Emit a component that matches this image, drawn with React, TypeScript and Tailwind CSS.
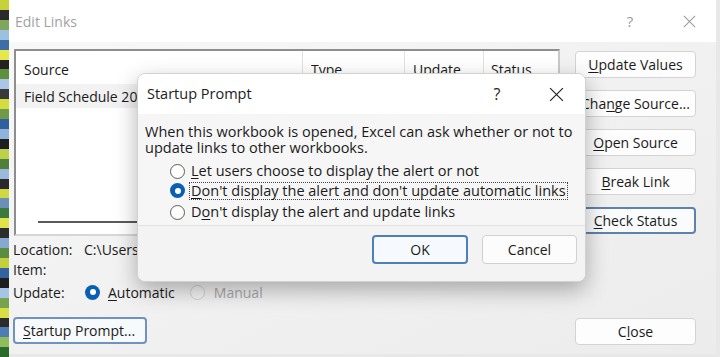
import React from "react";

const stripColors = [
  "#c7d23a", "#2b2b2b", "#7fa65a", "#9cc0e0", "#3d6ea8", "#e6e84a", "#222222", "#5e8f3c",
  "#a9c6e6", "#3a3a3a", "#d4dc3e", "#6f9a4a", "#2e5f9e", "#8fb3da", "#1f1f1f", "#bcd04a",
  "#4f7f38", "#9ab9dd", "#2a2a2a", "#cfd83f", "#6a8fb8", "#3b7a3b", "#e0e34c", "#2d2d2d",
  "#86a9d2", "#5c8c40", "#c4cf3c", "#34649f", "#1e1e1e", "#a6c4e4", "#78a34e", "#d8de44",
  "#2c2c2c", "#4d7db5", "#8fbd5a", "#2a6a2a",
];

function X({ size = 14, color = "#333" }: { size?: number; color?: string }) {
  return (
    <svg width={size} height={size} viewBox="0 0 14 14">
      <path d="M1 1 L13 13 M13 1 L1 13" stroke={color} strokeWidth="1.1" fill="none" />
    </svg>
  );
}

function Btn({ children, cls }: { children: React.ReactNode; cls: string }) {
  return (
    <div
      className={
        "h-[27px] flex items-center justify-center rounded-[4px] text-[14px] text-[#1b1b1b] " + cls
      }
    >
      {children}
    </div>
  );
}

function Radio({ checked, disabled }: { checked?: boolean; disabled?: boolean }) {
  if (checked) {
    return (
      <div className="w-[15px] h-[15px] rounded-full bg-[#0a5fb4] flex items-center justify-center shrink-0">
        <div className="w-[6px] h-[6px] rounded-full bg-white" />
      </div>
    );
  }
  return (
    <div
      className={
        disabled
          ? "w-[15px] h-[15px] rounded-full border border-[#cfcfcf] bg-[#f3f3f3] shrink-0"
          : "w-[15px] h-[15px] rounded-full border border-[#5c5c5c] bg-white shrink-0"
      }
    />
  );
}

export default function App() {
  return (
    <div className="w-[720px] h-[357px] relative overflow-hidden bg-[#e8e8e8] flex font-['Open_Sans',sans-serif] text-[#1b1b1b]">
      {/* left background strip */}
      <div className="w-[9px] h-full flex flex-col">
        {stripColors.map((c, i) => (
          <div key={i} className="flex-1" style={{ backgroundColor: c }} />
        ))}
      </div>

      {/* Edit Links dialog */}
      <div className="w-[707px] h-[354px] flex flex-col bg-white">
        {/* title bar */}
        <div className="h-[42px] bg-white flex items-center pl-[6px] shrink-0">
          <span className="text-[14px] text-[#a2a2a2]">Edit Links</span>
          <span className="ml-auto text-[15px] text-[#9a9a9a] w-[14px] text-center">?</span>
          <div className="ml-[45px] mr-[20px] w-[14px] flex items-center justify-center">
            <X size={13} color="#9a9a9a" />
          </div>
        </div>

        {/* body */}
        <div className="flex-1 flex bg-gradient-to-br from-[#f8f8f8] via-[#f1f1f1] to-[#ececec] pl-[5px]">
          {/* left column */}
          <div className="w-[546px] flex flex-col pt-[7px]">
            {/* list box */}
            <div className="h-[187px] border-2 border-[#8e8e8e] border-r-[#c9c9c9] border-b-[#d6d6d6] bg-white flex flex-col">
              <div className="h-[33px] flex items-center text-[14px] bg-white">
                <div className="w-[287px] h-full flex items-center pl-[8px] pt-[3px] border-r border-[#e1e1e1]">Source</div>
                <div className="w-[102px] h-full flex items-center pl-[8px] pt-[3px] border-r border-[#e1e1e1]">Type</div>
                <div className="w-[79px] h-full flex items-center pl-[8px] pt-[3px] border-r border-[#e1e1e1]">Update</div>
                <div className="flex-1 h-full flex items-center pl-[7px] pt-[3px]">Status</div>
              </div>
              <div className="h-[24px] flex items-center text-[14px] bg-[#f2f2f2] w-[287px]">
                <div className="ml-[8px] w-[113px] overflow-hidden whitespace-nowrap">Field Schedule 2021.xlsx</div>
              </div>
              <div className="mt-auto mb-[11px] ml-[22px] w-[480px] h-[2px] bg-[#5a5a5a]" />
            </div>

            {/* info rows */}
            <div className="mt-[3px] ml-[-1px] text-[14px] flex flex-col">
              <div className="h-[20px] flex items-center">
                <span className="w-[71px]">Location:</span>
                <span className="w-[53px] overflow-hidden whitespace-nowrap">C:\Users\Documents\Field Schedule 2021.xlsx</span>
              </div>
              <div className="h-[20px] flex items-center">
                <span className="w-[71px]">Item:</span>
              </div>
              <div className="h-[24px] mt-[1px] flex items-center">
                <span className="w-[72px]">Update:</span>
                <Radio checked />
                <span className="ml-[8px]">
                  <u className="underline-offset-2">A</u>utomatic
                </span>
                <div className="ml-[15px]">
                  <Radio disabled />
                </div>
                <span className="ml-[9px] text-[#a8a8a8]">Manual</span>
              </div>
            </div>

            <div className="mt-[13px] ml-[-1px] w-[134px]">
              <Btn cls="border-2 border-[#6f93bb] bg-[#f7fafd] justify-start pl-[8px]">
                <span>
                  <u className="underline-offset-2">S</u>tartup Prompt...
                </span>
              </Btn>
            </div>
          </div>

          {/* right column */}
          <div className="ml-[15px] w-[121px] flex flex-col pt-[9px] gap-[12px]">
            <Btn cls="border border-[#d3d3d3] bg-[#fdfdfd]">
              <span><u className="underline-offset-2">U</u>pdate Values</span>
            </Btn>
            <Btn cls="border border-[#d3d3d3] bg-[#fdfdfd]">
              <span>Cha<u className="underline-offset-2">n</u>ge Source...</span>
            </Btn>
            <Btn cls="border border-[#d3d3d3] bg-[#fdfdfd]">
              <span><u className="underline-offset-2">O</u>pen Source</span>
            </Btn>
            <Btn cls="border border-[#d3d3d3] bg-[#fdfdfd]">
              <span><u className="underline-offset-2">B</u>reak Link</span>
            </Btn>
            <Btn cls="border-2 border-[#5f82aa] bg-[#f9fbfd]">
              <span><u className="underline-offset-2">C</u>heck Status</span>
            </Btn>
            <Btn cls="mt-[72px] border border-[#d3d3d3] bg-[#fdfdfd]">
              <span>C<u className="underline-offset-2">l</u>ose</span>
            </Btn>
          </div>
        </div>
      </div>

      {/* Startup Prompt overlay dialog */}
      <div className="absolute left-[137px] top-[73px] w-[449px] h-[209px] rounded-[8px] border border-[#d2d2d2] bg-[#f4f4f4] shadow-[0_8px_22px_rgba(0,0,0,0.3)] flex flex-col overflow-hidden">
        <div className="h-[40px] bg-white flex items-center pl-[9px] shrink-0">
          <span className="text-[14.5px] text-[#1b1b1b]">Startup Prompt</span>
          <span className="ml-auto text-[16px] text-[#222] w-[14px] text-center">?</span>
          <div className="ml-[45px] mr-[21px] w-[15px] flex items-center justify-center">
            <X size={15} color="#222" />
          </div>
        </div>
        <div className="flex-1 bg-[#f6f6f6] flex flex-col pl-[7px] pt-[10px] text-[14.5px]">
          <div className="leading-[16px] whitespace-nowrap">When this workbook is opened, Excel can ask whether or not to</div>
          <div className="leading-[16px]">update links to other workbooks.</div>
          <div className="mt-[6px] h-[18px] flex items-center pl-[25px]">
            <Radio />
            <span className="ml-[6px]"><u className="underline-offset-2">L</u>et users choose to display the alert or not</span>
          </div>
          <div className="mt-[1px] h-[19px] flex items-center pl-[25px]">
            <Radio checked />
            <span className="ml-[4px] px-[1px] border border-dotted border-[#444] leading-[16px] whitespace-nowrap">
              <u className="underline-offset-2">D</u>on't display the alert and don't update automatic links
            </span>
          </div>
          <div className="mt-[3px] h-[18px] flex items-center pl-[25px]">
            <Radio />
            <span className="ml-[6px]">D<u className="underline-offset-2">o</u>n't display the alert and update links</span>
          </div>
        </div>
        <div className="h-[1px] bg-[#e2e2e2]" />
        <div className="h-[55px] bg-[#f3f3f3] flex items-start pt-[9px] pl-[234px] gap-[14px]">
          <Btn cls="w-[96px] h-[29px] border-2 border-[#4d7fba] bg-[#f6fafe] text-[14px]">OK</Btn>
          <Btn cls="w-[95px] h-[29px] border border-[#d0d0d0] bg-[#fcfcfc] text-[14px]">Cancel</Btn>
        </div>
      </div>
    </div>
  );
}
